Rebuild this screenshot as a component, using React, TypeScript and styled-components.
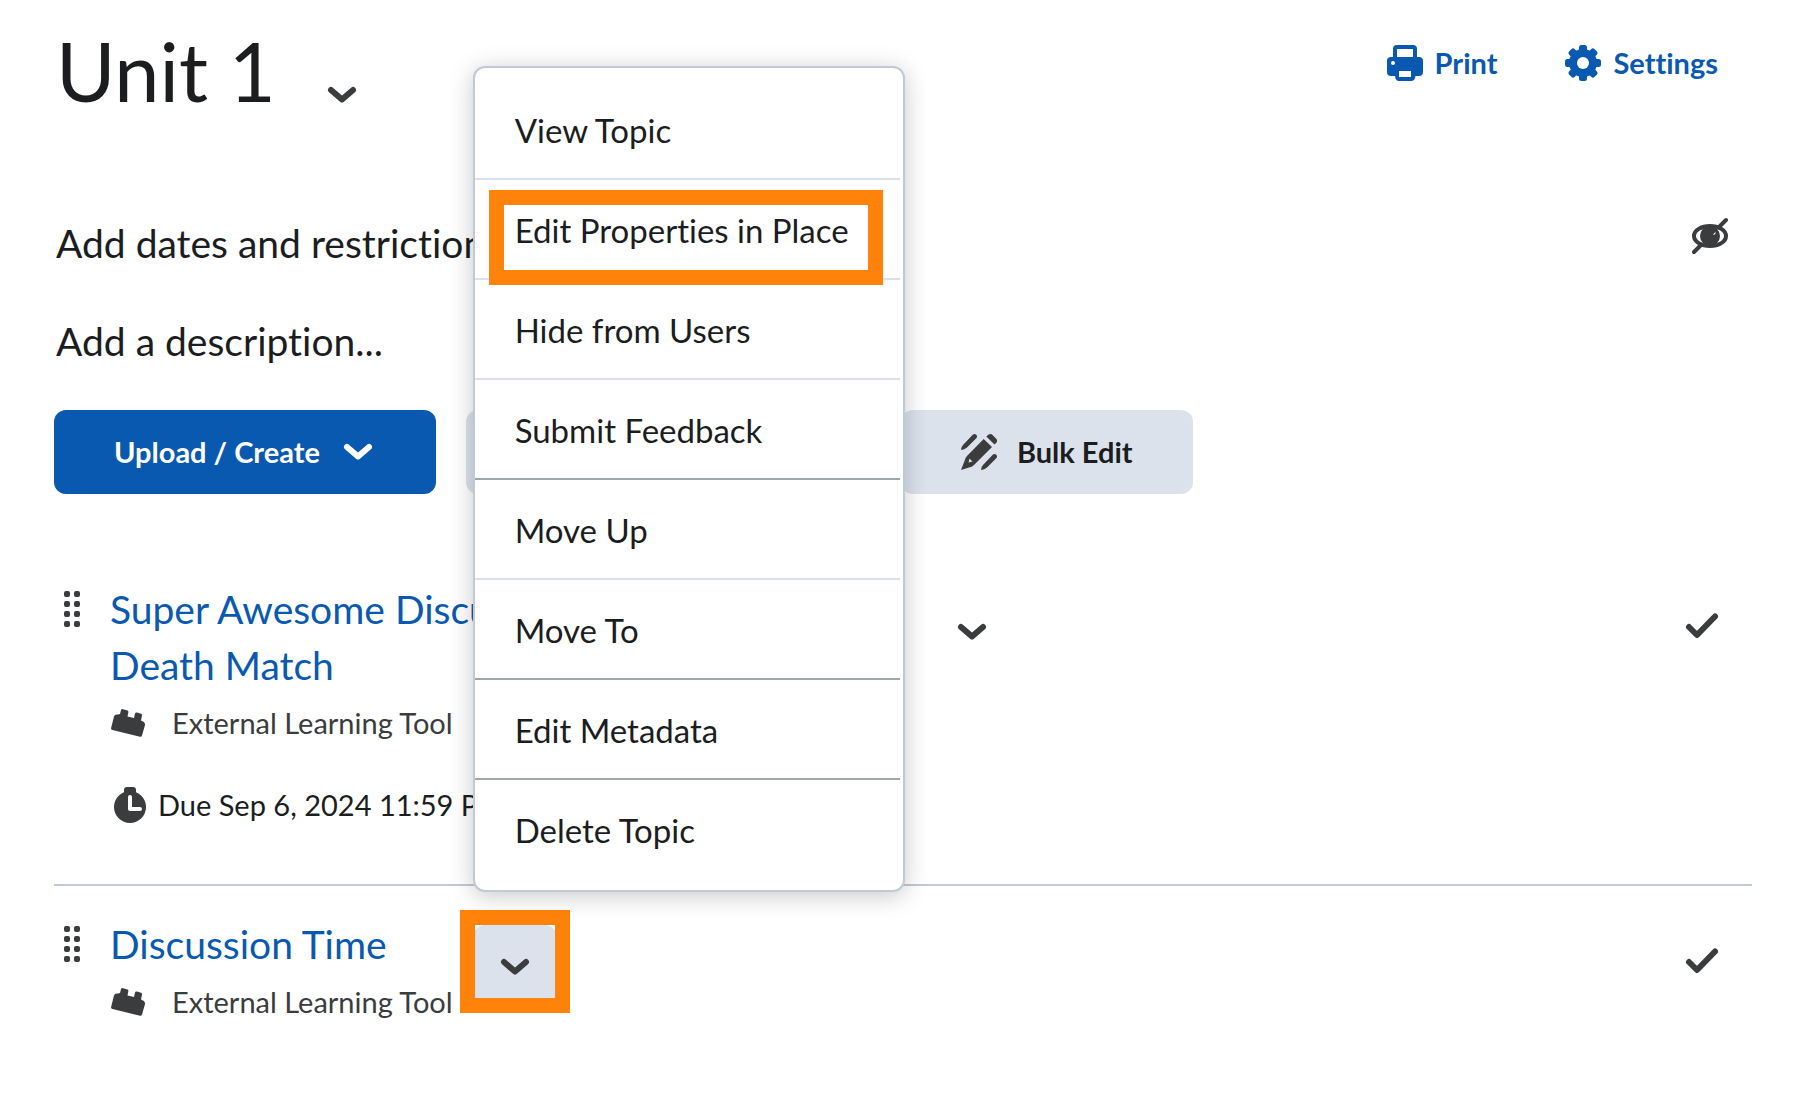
import React from "react";
import styled, { createGlobalStyle } from "styled-components";

const color = {
  ink: "#1b1d1f",
  icon: "#3a3c3e",
  blue: "#0959b0",
  mica: "#dce2ec",
  border: "#c0cad4",
  separator: "#9ea7ac",
  mark: "#ff830a",
};

const GlobalStyle = createGlobalStyle`
  *, *::before, *::after { box-sizing: border-box; }
  body {
    margin: 0;
    background: #fff;
    color: ${color.ink};
    font-family: Lato, "Open Sans", sans-serif;
    font-size: 29px;
    line-height: 40px;
    font-variant-ligatures: none;
  }
  button {
    font: inherit;
    font-variant-ligatures: none;
    color: inherit;
    border: 0;
    margin: 0;
    padding: 0;
    background: none;
    cursor: pointer;
  }
  svg { display: block; flex: none; }
`;

const Page = styled.main`
  padding: 23px 46px 48px 54px;
`;

const Header = styled.header`
  display: flex;
  justify-content: space-between;
  align-items: flex-start;
  margin-bottom: 96px;
`;

const TitleGroup = styled.div`
  display: flex;
  align-items: flex-end;
  gap: 24px;
  padding-left: 2px;
`;

const Title = styled.h1`
  margin: 0;
  font-size: 81px;
  font-weight: 400;
  line-height: 96px;
`;

const IconButton = styled.button<{ $active?: boolean }>`
  display: flex;
  align-items: center;
  justify-content: center;
  width: 84px;
  height: 84px;
  border-radius: 12px;
  color: ${color.icon};
  background: ${(p) => (p.$active ? color.mica : "transparent")};
`;

const TitleToggle = styled(IconButton)`
  height: 48px;
`;

const Tools = styled.nav`
  display: flex;
  gap: 68px;
  padding: 20px 34px 0 0;
`;

const ToolButton = styled.button`
  display: flex;
  align-items: center;
  gap: 12px;
  color: ${color.blue};
  font-weight: 700;
`;

const MetaRow = styled.div`
  display: flex;
  align-items: flex-start;
  justify-content: space-between;
  padding: 0 24px 0 2px;
  margin-bottom: 42px;
  color: ${color.icon};
`;

const Placeholder = styled.button`
  color: ${color.ink};
  font-size: 39px;
  line-height: 56px;
`;

const Description = styled.div`
  padding-left: 2px;
  margin-bottom: 41px;
`;

const Actions = styled.div`
  display: flex;
  gap: 30px;
  margin-bottom: 57px;
`;

const ActionButton = styled.button<{ $primary?: boolean }>`
  display: flex;
  align-items: center;
  justify-content: center;
  gap: 20px;
  height: 84px;
  padding: 0 60px;
  border-radius: 12px;
  font-weight: 700;
  color: ${(p) => (p.$primary ? "#fff" : color.ink)};
  background: ${(p) => (p.$primary ? color.blue : color.mica)};
`;

const WideAction = styled(ActionButton)`
  width: 405px;
`;

const DarkIcon = styled.span`
  color: ${color.icon};
`;

const TopicList = styled.ul`
  list-style: none;
  margin: 0;
  padding: 0;
`;

const Topic = styled.li`
  display: flex;
  align-items: flex-start;
  padding: 30px 32px 59px 10px;
  border-bottom: 2px solid ${color.border};
  &:last-child { border-bottom: 0; }
`;

const Handle = styled.button`
  display: grid;
  grid-template-columns: 6px 6px;
  gap: 4px;
  padding-top: 10px;
  margin-right: 30px;
`;

const Dot = styled.span`
  width: 6px;
  height: 6px;
  border-radius: 2px;
  background: ${color.icon};
`;

const TopicBody = styled.div<{ $wide?: boolean }>`
  display: flex;
  flex: 0 1 ${(p) => (p.$wide ? "800px" : "auto")};
  flex-direction: column;
  gap: 10px;
`;

const TopicLink = styled.a`
  color: ${color.blue};
  font-size: 39px;
  line-height: 56px;
  text-decoration: none;
`;

const Kind = styled.div`
  display: flex;
  align-items: center;
  gap: 26px;
  color: ${color.icon};
`;

const Due = styled.div`
  display: flex;
  align-items: center;
  gap: 12px;
  margin-top: 32px;
  padding-left: 4px;
`;

const ToggleWrap = styled.div`
  position: relative;
  margin: 9px auto 0 20px;
`;

const Status = styled.span`
  padding-top: 27px;
  color: ${color.icon};
`;

const Menu = styled.div`
  position: absolute;
  z-index: 2;
  left: 0;
  bottom: calc(100% + 33px);
  width: 432px;
  padding: 12px 3px 12px 0;
  border: 2px solid ${color.border};
  border-radius: 12px;
  background: #fff;
  box-shadow: 0 4px 24px rgba(0, 0, 0, 0.22);
`;

const MenuItem = styled.button<{ $section?: boolean }>`
  position: relative;
  display: block;
  width: 100%;
  padding: 30px 40px 28px;
  border-bottom: 2px solid ${(p) => (p.$section ? color.separator : color.mica)};
  text-align: left;
  font-size: 33px;
  line-height: 40px;
  white-space: nowrap;
  &:last-child { border-bottom: 0; }
`;

const ItemMark = styled.span`
  position: absolute;
  z-index: 1;
  inset: 10px 17px -7px 14px;
  border: 15px solid ${color.mark};
  pointer-events: none;
`;

const ToggleMark = styled.span`
  position: absolute;
  inset: -15px -13px -4px -13px;
  border: 15px solid ${color.mark};
  pointer-events: none;
`;

const Chevron = () => (
  <svg width="36" height="36" viewBox="0 0 36 36" fill="none" stroke="currentColor" strokeWidth="6" strokeLinecap="round" strokeLinejoin="round">
    <path d="M7 13 18 22.5 29 13" />
  </svg>
);

const Check = () => (
  <svg width="36" height="36" viewBox="0 0 36 36" fill="none" stroke="currentColor" strokeWidth="6" strokeLinecap="round" strokeLinejoin="round">
    <path d="M5 19 13 27 31 8.500" />
  </svg>
);

const Printer = () => (
  <svg width="36" height="36" viewBox="0 0 36 36" fill="currentColor">
    <path fillRule="evenodd" d="M10 0H26Q30 0 30 4V12H32Q36 12 36 16V27Q36 31 32 31H28.500Q28 36 24 36H12Q8.500 36 8 31H4Q0 31 0 27V16Q0 12 4 12H6V4Q6 0 10 0ZM10 4V12H26V4ZM12 26V32H24V26ZM6 16A2 2 0 1 0 6 20A2 2 0 1 0 6 16Z" />
  </svg>
);

const Gear = () => (
  <svg width="36" height="36" viewBox="0 0 36 36">
    <g fill="currentColor">
      <circle cx="18" cy="18" r="14" />
      {[0, 45, 90, 135].map((a) => (
        <rect key={a} x="14" y="0" width="8" height="36" rx="2.500" transform={`rotate(${a} 18 18)`} />
      ))}
    </g>
    <circle cx="18" cy="18" r="6" fill="#fff" />
  </svg>
);

const EyeOff = () => (
  <svg width="36" height="42" viewBox="0 -2 36 42" fill="none" stroke="currentColor">
    <ellipse cx="18" cy="19" rx="16" ry="10" strokeWidth="4" />
    <circle cx="18" cy="19" r="10" fill="currentColor" stroke="none" />
    <path d="M2 35 9 28M27 10 34 3" strokeWidth="4" strokeLinecap="round" />
    <path d="M23.500 15V16.500Q23 18 21 17.500Z" fill="#fff" stroke="none" />
  </svg>
);

const Pencils = () => (
  <svg width="36" height="36" viewBox="0 0 36 36" fill="currentColor">
    <path fillRule="evenodd" d="M22.700 5 31 13 13 31Q11 33 8 33.500L0 36 3.500 27Q4 24 6 22ZM8.500 24.500 7.500 28.500 11.500 27.500Z" />
    <path d="M25.300 2.500 27 1Q29.500-.8 31.500 1L35 4.500Q37 6.500 35.500 8.500L33.500 10.500Z" />
    <path d="M0 16Q0 13 2 11L11.500 1Q13 -.5 15 .5 16.800 2 15.500 4L6 13.500Q3.500 15.500 0 16Z" />
    <path d="M20 36Q20 33 22 31L31.500 21Q33 19.500 35 20.500 36.800 22 35.500 24L26 33.500Q23.500 35.500 20 36Z" />
  </svg>
);

const Brick = () => (
  <svg width="36" height="28" viewBox="-1 0 36 28" fill="currentColor">
    <path d="M3 7.500Q3.800 5 7 5.500L9 5 10 1Q10.500-.2 12 .2L16.500 1.600Q17.700 2.200 17.300 3.500L16.500 7.500 23 9 24 4.500Q24.500 3 26 3.500L30 4.700Q31.300 5.200 31 6.500L30 11.500 32.500 12.800Q34.300 14 34 16L31 26.500Q30.500 28 29 27.700L1.500 21Q-.2 20.500.1 19Z" />
  </svg>
);

const Clock = () => (
  <svg width="32" height="36" viewBox="0 0 32 36">
    <g fill="currentColor">
      <circle cx="16" cy="20" r="16" />
      <rect x="10" y="0" width="12" height="10" rx="3" />
    </g>
    <path d="M16 10V22H26" fill="none" stroke="#fff" strokeWidth="4" strokeLinecap="round" strokeLinejoin="round" />
  </svg>
);

const menuItems = [
  { label: "View Topic" },
  { label: "Edit Properties in Place", marked: true },
  { label: "Hide from Users" },
  { label: "Submit Feedback", section: true },
  { label: "Move Up" },
  { label: "Move To", section: true },
  { label: "Edit Metadata", section: true },
  { label: "Delete Topic" },
];

const DragHandle = () => (
  <Handle>
    {Array.from({ length: 8 }, (_, i) => (
      <Dot key={i} />
    ))}
  </Handle>
);

const ExternalTool = () => (
  <Kind>
    <Brick />
    External Learning Tool
  </Kind>
);

export default function App() {
  return (
    <>
      <GlobalStyle />
      <Page>
        <Header>
          <TitleGroup>
            <Title>Unit 1</Title>
            <TitleToggle>
              <Chevron />
            </TitleToggle>
          </TitleGroup>
          <Tools>
            <ToolButton>
              <Printer />
              Print
            </ToolButton>
            <ToolButton>
              <Gear />
              Settings
            </ToolButton>
          </Tools>
        </Header>

        <MetaRow>
          <Placeholder>Add dates and restrictions...</Placeholder>
          <EyeOff />
        </MetaRow>
        <Description>
          <Placeholder>Add a description...</Placeholder>
        </Description>

        <Actions>
          <ActionButton $primary>
            Upload / Create
            <Chevron />
          </ActionButton>
          <WideAction>
            <Chevron />
          </WideAction>
          <ActionButton>
            <DarkIcon>
              <Pencils />
            </DarkIcon>
            Bulk Edit
          </ActionButton>
        </Actions>

        <TopicList>
          <Topic>
            <DragHandle />
            <TopicBody $wide>
              <TopicLink href="#death-match">
                Super Awesome Discussion
                <br />
                Death Match
              </TopicLink>
              <ExternalTool />
              <Due>
                <DarkIcon>
                  <Clock />
                </DarkIcon>
                Due Sep 6, 2024 11:59 PM
              </Due>
            </TopicBody>
            <ToggleWrap>
              <IconButton>
                <Chevron />
              </IconButton>
            </ToggleWrap>
            <Status>
              <Check />
            </Status>
          </Topic>
          <Topic>
            <DragHandle />
            <TopicBody>
              <TopicLink href="#discussion-time">Discussion Time</TopicLink>
              <ExternalTool />
            </TopicBody>
            <ToggleWrap>
              <IconButton $active aria-haspopup="menu" aria-expanded="true">
                <Chevron />
              </IconButton>
              <ToggleMark />
              <Menu role="menu">
                {menuItems.map((item) => (
                  <MenuItem key={item.label} role="menuitem" $section={item.section}>
                    {item.label}
                    {item.marked && <ItemMark />}
                  </MenuItem>
                ))}
              </Menu>
            </ToggleWrap>
            <Status>
              <Check />
            </Status>
          </Topic>
        </TopicList>
      </Page>
    </>
  );
}
